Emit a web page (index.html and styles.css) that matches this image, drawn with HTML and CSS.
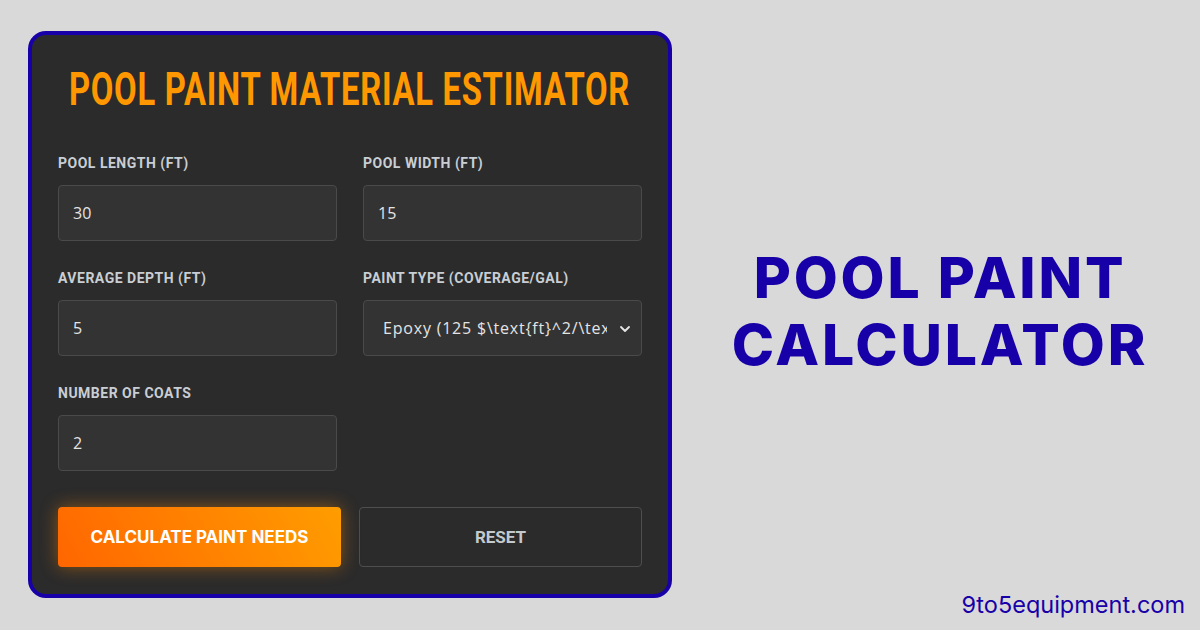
FILE: index.html
```html
<!DOCTYPE html>
<html lang="en">
<head>
<meta charset="utf-8">
<title>Pool Paint Calculator</title>
<link rel="stylesheet" href="styles.css">
</head>
<body>
<div class="page">
  <section class="card">
    <h1 class="card-title"><span class="card-title-text">POOL PAINT MATERIAL ESTIMATOR</span></h1>
    <div class="fields">
      <div class="field">
        <label class="field-label">POOL LENGTH (FT)</label>
        <div class="input">30</div>
      </div>
      <div class="field">
        <label class="field-label">POOL WIDTH (FT)</label>
        <div class="input">15</div>
      </div>
      <div class="field">
        <label class="field-label">AVERAGE DEPTH (FT)</label>
        <div class="input">5</div>
      </div>
      <div class="field">
        <label class="field-label">PAINT TYPE (COVERAGE/GAL)</label>
        <div class="select">
          <span class="select-text">Epoxy (125 $\text{ft}^2/\text{gal}$)</span>
          <svg class="chevron" width="12" height="8" viewBox="0 0 12 8"><path d="M2 2 L6 6 L10 2" fill="none" stroke="#e6e6e6" stroke-width="1.8" stroke-linecap="round" stroke-linejoin="round"/></svg>
        </div>
      </div>
      <div class="field">
        <label class="field-label">NUMBER OF COATS</label>
        <div class="input">2</div>
      </div>
    </div>
    <div class="actions">
      <button class="btn btn-primary">CALCULATE PAINT NEEDS</button>
      <button class="btn btn-secondary">RESET</button>
    </div>
  </section>
  <aside class="side">
    <h2 class="side-title">POOL PAINT<br>CALCULATOR</h2>
    <div class="side-footer">9to5equipment.com</div>
  </aside>
</div>
</body>
</html>
```

FILE: styles.css
```css
* { box-sizing: border-box; }
html, body { margin: 0; padding: 0; }
body {
  width: 1200px;
  height: 630px;
  background: #d9d9d9;
  font-family: "Inter", "Liberation Sans", sans-serif;
  overflow: hidden;
}
.page {
  display: grid;
  grid-template-columns: 644px 1fr;
  height: 630px;
  padding: 31px 0 0 28px;
}
.card {
  width: 644px;
  height: 567px;
  background: #2b2b2b;
  border: 4px solid #1800a8;
  border-radius: 18px;
  padding: 26px 26px 0 26px;
}
.card-title {
  margin: 0;
  display: flex;
  justify-content: center;
  font-family: "Roboto", "Liberation Sans", sans-serif;
  font-weight: 700;
  font-size: 46px;
  line-height: 56px;
  color: #ff9800;
  white-space: nowrap;
}
.card-title-text {
  display: inline-block;
  flex: none;
  transform: scaleX(0.713);
  transform-origin: center;
  letter-spacing: 1px;
}
.fields {
  margin-top: 38px;
  display: grid;
  grid-template-columns: 279px 279px;
  column-gap: 26px;
  row-gap: 29px;
}
.field {
  display: flex;
  flex-direction: column;
}
.field-label {
  font-family: "Roboto", "Liberation Sans", sans-serif;
  font-weight: 700;
  font-size: 14px;
  line-height: 17px;
  letter-spacing: 0.5px;
  color: #c9ced4;
  margin-bottom: 13px;
}
.input, .select {
  height: 56px;
  background: #333333;
  border: 1px solid #4a4a4a;
  border-radius: 4px;
  display: flex;
  align-items: center;
  padding: 0 14px;
  font-family: "Open Sans", "Inter", sans-serif;
  font-size: 16px;
  color: #e4e4e4;
}
.select {
  position: relative;
  padding: 0 34px 0 19px;
  letter-spacing: 0.8px;
}
.select-text {
  white-space: nowrap;
  overflow: hidden;
  display: block;
}
.chevron {
  position: absolute;
  right: 10px;
  top: 24px;
}
.actions {
  margin-top: 36px;
  display: grid;
  grid-template-columns: 283px 1fr;
  column-gap: 18px;
}
.btn {
  height: 60px;
  border-radius: 4px;
  font-weight: 700;
  cursor: pointer;
}
.btn-primary {
  border: none;
  background: linear-gradient(60deg, #ff6600 0%, #ff9d00 100%);
  color: #ffffff;
  font-family: "Inter", sans-serif;
  font-size: 17px;
  box-shadow: 0 0 18px rgba(255, 140, 0, 0.45);
}
.btn-secondary {
  background: transparent;
  border: 1px solid #4e4e4e;
  color: #c4c9ce;
  font-family: "Roboto", sans-serif;
  font-size: 17px;
}
.side {
  display: flex;
  flex-direction: column;
  align-items: center;
}
.side-title {
  margin: 0;
  margin-top: 213px;
  margin-left: 8px;
  text-align: center;
  font-family: "Inter", sans-serif;
  font-weight: 800;
  font-size: 57px;
  line-height: 67px;
  letter-spacing: 2.8px;
  color: #1800a8;
}
.side-footer {
  margin-top: auto;
  align-self: flex-end;
  margin-right: 15px;
  margin-bottom: 11px;
  font-family: "Inter", sans-serif;
  font-size: 23.5px;
  line-height: 28px;
  color: #1800a8;
}
```
